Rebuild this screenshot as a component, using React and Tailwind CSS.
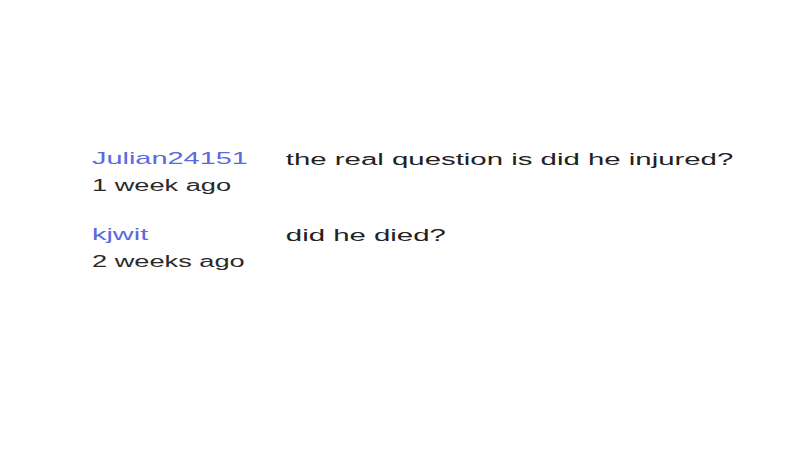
import React from 'react';

const COMMENTS = [
  { user: 'Julian24151', time: '1 week ago', text: 'the real question is did he injured?' },
  { user: 'kjwit', time: '2 weeks ago', text: 'did he died?' }
];

const Comment = ({ user, time, text }) => (
  <div className="flex">
    <div className="w-[114px] shrink-0">
      <div className="text-[17px] leading-[20px] text-[#5a6ae0]">{user}</div>
      <div className="mt-[7px] text-[16px] leading-[20px] text-[#2a2a2a]">{time}</div>
    </div>
    <div className="text-[17.3px] leading-[20px] text-[#222]">{text}</div>
  </div>
);

export default function App() {
  return (
    <div className="w-[800px] h-[450px] bg-white overflow-hidden pt-[149px] pl-[92px]" style={{ fontFamily: '"Liberation Sans", Arial, sans-serif' }}>
      <div className="origin-left scale-x-[1.7] flex flex-col gap-[29px] w-[400px]">
        {COMMENTS.map((c) => (
          <Comment key={c.user} {...c} />
        ))}
      </div>
    </div>
  );
}
